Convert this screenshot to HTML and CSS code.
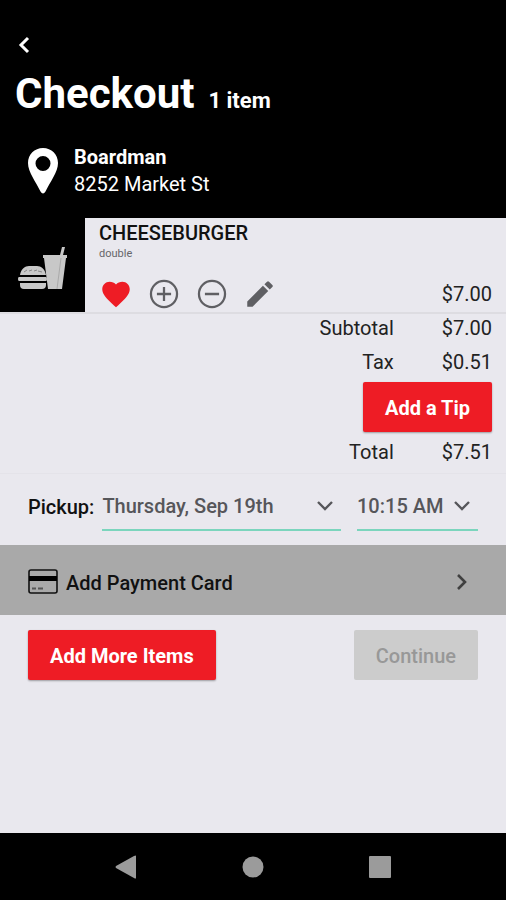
FILE: index.html
```html
<!DOCTYPE html>
<html lang="en">
<head>
<meta charset="utf-8">
<meta name="viewport" content="width=device-width, initial-scale=1">
<title>Checkout</title>
<link rel="stylesheet" href="styles.css">
</head>
<body>
<header class="header">
  <button class="icon-btn back" aria-label="Back">
    <svg width="12" height="18" viewBox="0 0 12 18"><path d="M10 2 3 9l7 7" fill="none" stroke="#fff" stroke-width="3"/></svg>
  </button>
  <div class="title-row">
    <h1 class="title">Checkout</h1>
    <span class="count">1 item</span>
  </div>
  <div class="store">
    <svg width="30" height="46" viewBox="0 0 30 46"><path fill="#fff" fill-rule="evenodd" d="M15 0C6.500 0 0 6.500 0 15c0 9 8 19 12.500 28.500Q15 47.500 17.500 43.500C22 34 30 24 30 15 30 6.500 23.500 0 15 0zm0 8a7.500 7.500 0 1 1 0 15 7.500 7.500 0 0 1 0-15z"/></svg>
    <address class="store-text"><strong class="store-name">Boardman</strong><br>8252 Market St</address>
  </div>
</header>
<main class="main">
  <section class="item">
    <div class="thumb">
      <svg width="50" height="44" viewBox="0 0 50 44">
        <path fill="#c8c8c8" d="M25 9h17l2-8h3l-2 8h4v3h-1l-4 31H30L26 12h-1z"/>
        <path fill="#c8c8c8" d="M2 29c1-6 5-9 9-9h8c4 0 8 3 9 9zM1 31h27q1 0 1 2t-1 2H1q-1 0-1-2t1-2zM2 37h26v2q0 4-4 4H6q-4 0-4-4z"/>
        <path d="M6 26l3-2m2 1 3-1m2 1 3-1m1 1 4 1" stroke="#888" fill="none"/>
        <path d="M43 12l-4 31" stroke="#aaa" fill="none"/>
      </svg>
    </div>
    <div class="item-body">
      <h2 class="item-name">CHEESEBURGER</h2>
      <p class="item-note">double</p>
      <div class="item-foot">
        <div class="actions">
          <button class="icon-btn" aria-label="Favorite"><svg width="34" height="34" viewBox="0 0 24 24"><path fill="#ee1c25" d="m12 21.350-1.450-1.320C5.400 15.360 2.300 12.280 2.300 8.700 2.300 5.720 4.620 3.400 7.500 3.400c1.740 0 3.410.610 4.500 1.890 1.090-1.280 2.760-1.890 4.500-1.890 2.880 0 5.200 2.320 5.200 5.300 0 3.580-3.100 6.660-8.250 11.340z"/></svg></button>
          <button class="icon-btn" aria-label="Add one"><svg width="34" height="34" viewBox="0 0 24 24"><path fill="none" stroke="#5f5f63" stroke-width="1.600" d="M12 2.800a9.200 9.200 0 1 1 0 18.400 9.200 9.200 0 0 1 0-18.400zM12 7v10M7 12h10"/></svg></button>
          <button class="icon-btn" aria-label="Remove one"><svg width="34" height="34" viewBox="0 0 24 24"><path fill="none" stroke="#5f5f63" stroke-width="1.600" d="M12 2.800a9.200 9.200 0 1 1 0 18.400 9.200 9.200 0 0 1 0-18.400zM7 12h10"/></svg></button>
          <button class="icon-btn" aria-label="Edit"><svg width="34" height="34" viewBox="0 0 24 24"><path fill="#5f5f63" d="M3 17.250V21h3.750L17.810 9.940l-3.750-3.750zM20.710 7.040a1 1 0 0 0 0-1.410l-2.340-2.340a1 1 0 0 0-1.410 0l-1.830 1.830 3.750 3.750z"/></svg></button>
        </div>
        <span class="price">$7.00</span>
      </div>
    </div>
  </section>
  <dl class="totals">
    <div class="line"><dt>Subtotal</dt><dd class="amount">$7.00</dd></div>
    <div class="line"><dt>Tax</dt><dd class="amount">$0.51</dd></div>
    <div class="line"><dd class="tip-cell"><button class="btn">Add a Tip</button></dd></div>
    <div class="line"><dt>Total</dt><dd class="amount">$7.51</dd></div>
  </dl>
  <form class="pickup">
    <label class="pickup-label" for="day">Pickup:</label>
    <div class="picker picker-day">
      <select class="select" id="day"><option>Thursday, Sep 19th</option></select>
      <svg class="chevron" width="18" height="12" viewBox="0 0 18 12"><path d="m2 2 7 7 7-7" fill="none" stroke="#56565a" stroke-width="2.400"/></svg>
    </div>
    <div class="picker">
      <select class="select" id="time" aria-label="Pickup time"><option>10:15 AM</option></select>
      <svg class="chevron" width="18" height="12" viewBox="0 0 18 12"><path d="m2 2 7 7 7-7" fill="none" stroke="#56565a" stroke-width="2.400"/></svg>
    </div>
  </form>
  <button class="payment">
    <svg width="30" height="26" viewBox="0 0 30 26"><rect x="1" y="1" width="28" height="23" rx="2" fill="none" stroke="#111" stroke-width="1.600"/><path fill="#000" d="M1 7h28v5H1z"/><path d="M4 19.500h4m2 0h5" stroke="#555" stroke-width="2"/></svg>
    <span class="payment-text">Add Payment Card</span>
    <svg width="12" height="18" viewBox="0 0 12 18"><path d="m2 2 7 7-7 7" fill="none" stroke="#404040" stroke-width="2.600"/></svg>
  </button>
  <div class="footer-actions">
    <button class="btn">Add More Items</button>
    <button class="btn" disabled>Continue</button>
  </div>
</main>
<nav class="navbar" aria-label="System">
  <button class="icon-btn" aria-label="System back"><svg width="24" height="24" viewBox="0 0 24 24"><path fill="#9b9b9b" d="M22 1v22q0 1-2 0L2 13q-1-1 0-2L20 1q2-1 2 0z"/></svg></button>
  <button class="icon-btn" aria-label="Home"><svg width="24" height="24" viewBox="0 0 24 24"><circle cx="12" cy="12" r="10.500" fill="#9b9b9b"/></svg></button>
  <button class="icon-btn" aria-label="Recent apps"><svg width="24" height="24" viewBox="0 0 24 24"><rect x="1" y="1" width="22" height="22" rx="1" fill="#9b9b9b"/></svg></button>
</nav>
</body>
</html>
```
FILE: styles.css
```css
* {
  box-sizing: border-box;
}

body {
  margin: 0;
  min-height: 100vh;
  display: flex;
  flex-direction: column;
  background: #e9e8ee;
  color: #222;
  font: 20px/27px Roboto, "Liberation Sans", sans-serif;
}

h1, h2, p, dl, dd {
  margin: 0;
}

button, select {
  font: inherit;
}

svg {
  display: block;
  flex: none;
}

.icon-btn {
  display: block;
  padding: 0;
  border: 0;
  background: none;
}

.header {
  padding: 36px 16px 20px;
  background: #000;
  color: #fff;
}

.back {
  margin-left: 2px;
}

.title-row {
  display: flex;
  align-items: baseline;
  gap: 14px;
  margin-top: 16px;
}

.title {
  margin-left: -1px;
  font-size: 42px;
  line-height: 48px;
  font-weight: 700;
}

.count {
  font-size: 22px;
  font-weight: 700;
}

.store {
  display: flex;
  align-items: center;
  gap: 16px;
  margin: 26px 0 0 12px;
}

.store-text {
  font-style: normal;
}

.store-name {
  font-weight: 700;
}

.main {
  flex: 1;
}

.item {
  display: flex;
  border-bottom: 2px solid #dddce1;
}

.thumb {
  width: 85px;
  flex: none;
  display: flex;
  align-items: center;
  justify-content: center;
  padding-top: 5px;
  background: #000;
}

.item-body {
  flex: 1;
  padding: 2px 14px 1px;
}

.item-name {
  font-size: 20px;
  font-weight: 500;
  color: #111;
}

.item-note {
  font-size: 11px;
  line-height: 14px;
  color: #66666a;
}

.item-foot {
  display: flex;
  justify-content: space-between;
  align-items: center;
  margin-top: 16px;
}

.actions {
  display: flex;
  gap: 14px;
}

.totals {
  padding: 0 14px 7px;
  border-bottom: 1px solid #e4e3e9;
}

.line {
  display: flex;
  justify-content: flex-end;
  gap: 48px;
  line-height: 28px;
  margin-bottom: 6px;
}

.totals .line:last-child {
  margin: 0;
}

.btn {
  height: 50px;
  padding: 2px 22px 0;
  border: 0;
  border-radius: 2px;
  background: #ee1c25;
  color: #fff;
  font-weight: 700;
  box-shadow: 0 1px 2px #0005;
}

.btn:disabled {
  background: #ccc;
  color: #989898;
  font-weight: 500;
  box-shadow: none;
}

.tip-cell .btn {
  display: block;
}

.pickup {
  display: flex;
  align-items: center;
  padding: 9px 28px 14px;
  color: #111;
}

.pickup-label {
  margin-right: 8px;
  font-weight: 500;
}

.picker {
  position: relative;
  border-bottom: 2px solid #7bd5bd;
}

.picker-day {
  flex: 1;
  margin-right: 16px;
}

.select {
  display: block;
  width: 100%;
  height: 46px;
  padding: 0 34px 0 0;
  border: 0;
  appearance: none;
  background: none;
  color: #56565a;
  font-weight: 500;
}

.chevron {
  position: absolute;
  right: 7px;
  top: 17px;
  pointer-events: none;
}

.payment {
  display: flex;
  align-items: center;
  gap: 8px;
  width: 100%;
  height: 70px;
  padding: 3px 38px 0 28px;
  border: 0;
  background: #a9a9a9;
  color: #111;
  font-weight: 500;
  text-align: left;
}

.payment-text {
  flex: 1;
  padding-top: 3px;
}

.footer-actions {
  display: flex;
  justify-content: space-between;
  padding: 15px 28px;
}

.navbar {
  display: flex;
  justify-content: center;
  align-items: center;
  height: 67px;
  gap: 103px;
  background: #000;
}
```
